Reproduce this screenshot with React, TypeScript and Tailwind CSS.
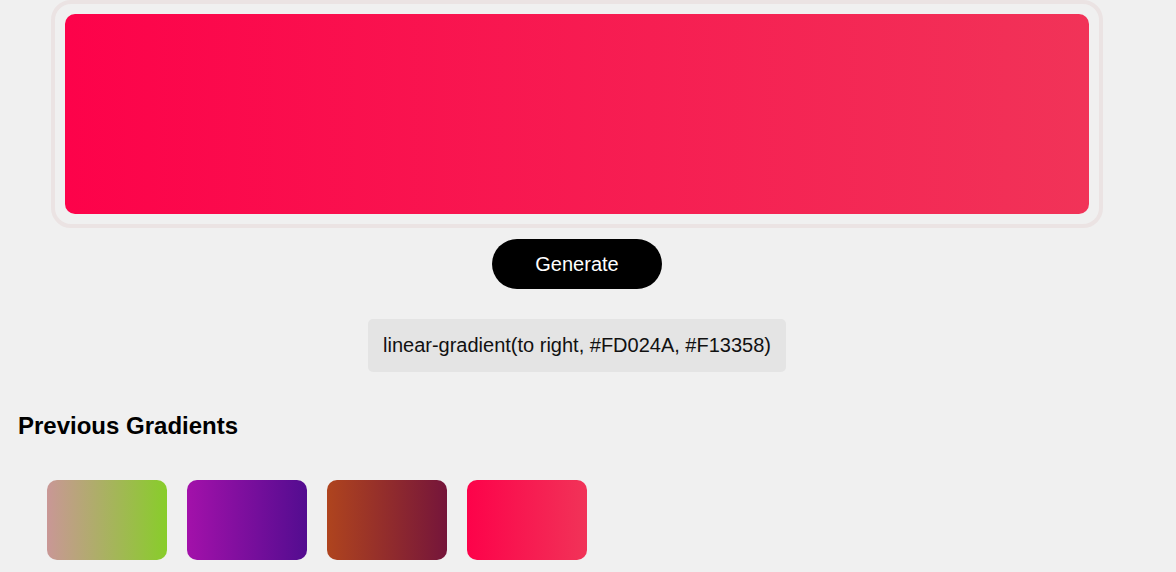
import { useState } from "react";

type Gradient = { from: string; to: string };

const history: Gradient[] = [
  { from: "#C99796", to: "#88CD2A" },
  { from: "#A311AA", to: "#530C90" },
  { from: "#AF441E", to: "#75153A" },
  { from: "#FD024A", to: "#F13358" },
];

export default function App() {
  const [current] = useState<Gradient>({ from: "#FD024A", to: "#F13358" });
  const css = `linear-gradient(to right, ${current.from}, ${current.to})`;

  return (
    <div className="min-h-screen w-full bg-[#f0f0f0] font-['Liberation_Sans',Arial,sans-serif] text-black">
      <div className="w-[1154px] flex flex-col items-center">
        {/* Preview */}
        <div className="w-[1052px] h-[228px] p-[10px] border-4 border-[#ebe3e3] rounded-[20px]">
          <div className="w-full h-full rounded-[10px]" style={{ background: css }} />
        </div>

        <button className="mt-[11px] w-[170px] h-[50px] rounded-full bg-black text-white text-[20px]">
          Generate
        </button>

        <div className="mt-[30px] px-[15px] py-[15px] bg-[#e4e4e4] rounded-[5px] text-[20px] leading-[23px] text-[#111]">
          {css}
        </div>
      </div>

      {/* History */}
      <div className="mt-[40px] px-[18px]">
        <h2 className="text-[24px] font-bold leading-[28px]">Previous Gradients</h2>
        <div className="mt-[40px] pl-[29px] flex gap-5">
          {history.map((g, i) => (
            <div
              key={i}
              className="w-[120px] h-[80px] rounded-[10px]"
              style={{ background: `linear-gradient(to right, ${g.from}, ${g.to})` }}
            />
          ))}
        </div>
      </div>
    </div>
  );
}
